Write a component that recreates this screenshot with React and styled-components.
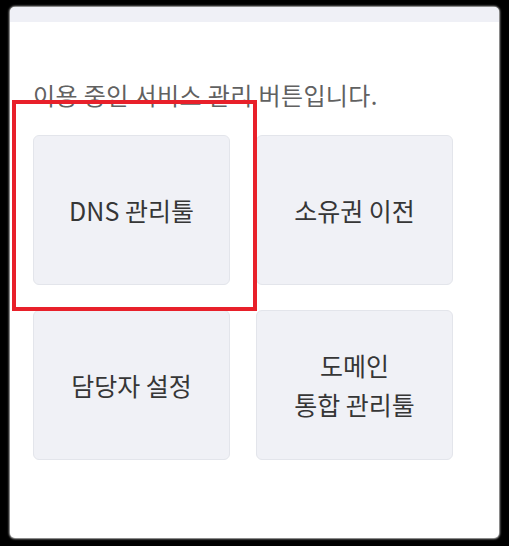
import React from "react";
import styled, { createGlobalStyle } from "styled-components";

const GlobalStyle = createGlobalStyle`
  html, body {
    margin: 0;
    padding: 0;
    background: #000;
  }
  body {
    font-family: "Noto Sans CJK KR", "Noto Sans", sans-serif;
  }
`;

const Screen = styled.div`
  width: 509px;
  height: 546px;
  padding: 7px 10px 8px 10px;
  box-sizing: border-box;
`;

const Card = styled.div`
  height: 100%;
  background: #fff;
  border-radius: 5px;
  overflow: hidden;
  box-shadow: 0 0 2px 1px #bbb;
  display: flex;
  flex-direction: column;
`;

const TopStrip = styled.div`
  height: 15px;
  background: #eff0f6;
`;

const Content = styled.div`
  padding: 56px 0 0 23px;
`;

const Description = styled.p`
  margin: 0 0 23px;
  font-size: 24px;
  line-height: 34px;
  color: #616161;
  letter-spacing: 0.4px;
`;

const Grid = styled.div`
  position: relative;
  display: grid;
  grid-template-columns: repeat(2, 197px);
  grid-auto-rows: 150px;
  column-gap: 26px;
  row-gap: 25px;
`;

const Tile = styled.button`
  display: flex;
  align-items: center;
  justify-content: center;
  background: #f0f1f6;
  border: 1px solid #e3e5eb;
  border-radius: 6px;
  font-family: inherit;
  font-size: 25px;
  line-height: 39px;
  color: #363636;
  text-align: center;
  padding: 0;
  white-space: pre-line;
`;

const Highlight = styled.div`
  position: absolute;
  left: -21px;
  top: -35px;
  width: 245px;
  height: 211px;
  border: 4px solid #e8202a;
  box-sizing: border-box;
  pointer-events: none;
`;

const tiles = ["DNS 관리툴", "소유권 이전", "담당자 설정", "도메인\n통합 관리툴"];

function App() {
  return (
    <>
      <GlobalStyle />
      <Screen>
        <Card>
          <TopStrip />
          <Content>
            <Description>이용 중인 서비스 관리 버튼입니다.</Description>
            <Grid>
              {tiles.map((t) => (
                <Tile key={t}>{t}</Tile>
              ))}
              <Highlight />
            </Grid>
          </Content>
        </Card>
      </Screen>
    </>
  );
}

export default App;
